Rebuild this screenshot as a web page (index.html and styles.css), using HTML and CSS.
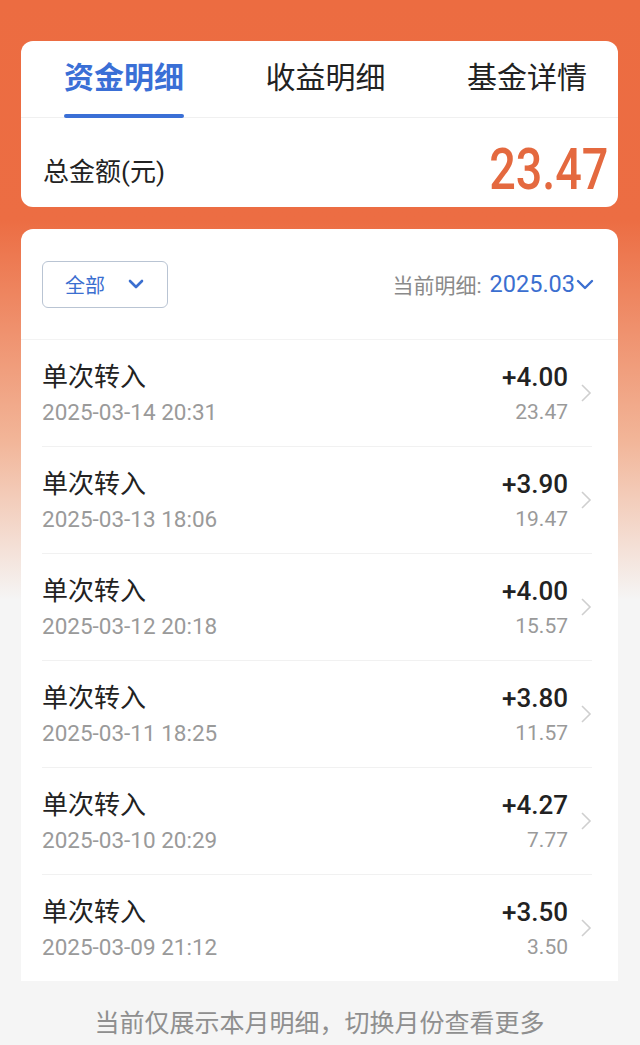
FILE: index.html
```html
<!DOCTYPE html>
<html lang="zh-cn">
<head>
    <meta charset="UTF-8">
    <meta name="viewport" content="width=device-width, initial-scale=1.0">
    <title>资金明细</title>
    <link rel="stylesheet" href="styles.css">
</head>
<body>
    <div class="page">
        <div class="summary">
            <div class="tabs">
                <div class="tab active">资金明细</div>
                <div class="tab">收益明细</div>
                <div class="tab">基金详情</div>
            </div>
            <div class="total">
                <span class="total-label">总金额(元)</span>
                <span class="total-value">23.47</span>
            </div>
        </div>

        <div class="detail">
            <div class="toolbar">
                <div class="filter">
                    <span>全部</span>
                    <svg width="18" height="12" viewBox="0 0 18 12"><path d="M3 3 L9 9 L15 3" fill="none" stroke="#3b6fd0" stroke-width="2.6" stroke-linecap="round" stroke-linejoin="round"/></svg>
                </div>
                <div class="month">
                    <span class="month-label">当前明细:</span>
                    <span class="month-value">2025.03</span>
                    <svg width="20" height="14" viewBox="0 0 20 14"><path d="M3 4 L10 11 L17 4" fill="none" stroke="#3b6fd0" stroke-width="2.4" stroke-linecap="round" stroke-linejoin="round"/></svg>
                </div>
            </div>

            <div class="list">
                <div class="row">
                    <div class="info"><div class="title">单次转入</div><div class="time">2025-03-14 20:31</div></div>
                    <div class="nums"><div class="amount">+4.00</div><div class="balance">23.47</div></div>
                    <svg class="arrow" width="12" height="20" viewBox="0 0 12 20"><path d="M2 2 L10 10 L2 18" fill="none" stroke="#cfcfcf" stroke-width="1.6"/></svg>
                </div>
                <div class="row">
                    <div class="info"><div class="title">单次转入</div><div class="time">2025-03-13 18:06</div></div>
                    <div class="nums"><div class="amount">+3.90</div><div class="balance">19.47</div></div>
                    <svg class="arrow" width="12" height="20" viewBox="0 0 12 20"><path d="M2 2 L10 10 L2 18" fill="none" stroke="#cfcfcf" stroke-width="1.6"/></svg>
                </div>
                <div class="row">
                    <div class="info"><div class="title">单次转入</div><div class="time">2025-03-12 20:18</div></div>
                    <div class="nums"><div class="amount">+4.00</div><div class="balance">15.57</div></div>
                    <svg class="arrow" width="12" height="20" viewBox="0 0 12 20"><path d="M2 2 L10 10 L2 18" fill="none" stroke="#cfcfcf" stroke-width="1.6"/></svg>
                </div>
                <div class="row">
                    <div class="info"><div class="title">单次转入</div><div class="time">2025-03-11 18:25</div></div>
                    <div class="nums"><div class="amount">+3.80</div><div class="balance">11.57</div></div>
                    <svg class="arrow" width="12" height="20" viewBox="0 0 12 20"><path d="M2 2 L10 10 L2 18" fill="none" stroke="#cfcfcf" stroke-width="1.6"/></svg>
                </div>
                <div class="row">
                    <div class="info"><div class="title">单次转入</div><div class="time">2025-03-10 20:29</div></div>
                    <div class="nums"><div class="amount">+4.27</div><div class="balance">7.77</div></div>
                    <svg class="arrow" width="12" height="20" viewBox="0 0 12 20"><path d="M2 2 L10 10 L2 18" fill="none" stroke="#cfcfcf" stroke-width="1.6"/></svg>
                </div>
                <div class="row">
                    <div class="info"><div class="title">单次转入</div><div class="time">2025-03-09 21:12</div></div>
                    <div class="nums"><div class="amount">+3.50</div><div class="balance">3.50</div></div>
                    <svg class="arrow" width="12" height="20" viewBox="0 0 12 20"><path d="M2 2 L10 10 L2 18" fill="none" stroke="#cfcfcf" stroke-width="1.6"/></svg>
                </div>
            </div>
        </div>

        <div class="footer">当前仅展示本月明细，切换月份查看更多</div>
    </div>
</body>
</html>
```

FILE: styles.css
```css
body {
    margin: 0;
    font-family: Roboto, "Noto Sans CJK SC", sans-serif;
    background: linear-gradient(to bottom, #ec6c41 0px, #ec6d43 220px, #f2b598 440px, #f5f5f5 600px, #f5f5f5 100%);
    min-height: 1045px;
}

.page {
    padding: 41px 22px 0 21px;
}

.summary {
    background: #ffffff;
    border-radius: 12px;
}

.tabs {
    display: flex;
    justify-content: space-between;
    padding: 0 31px 0 43px;
    height: 76px;
    border-bottom: 1px solid #f0f0f0;
}

.tab {
    position: relative;
    font-size: 30px;
    line-height: 74px;
    color: #222222;
}

.tab.active {
    color: #3a6fd6;
    font-weight: bold;
}

.tab.active::after {
    content: "";
    position: absolute;
    left: 0;
    right: 0;
    bottom: -1px;
    height: 4px;
    border-radius: 2px;
    background: #3a6fd6;
}

.total {
    display: flex;
    justify-content: space-between;
    align-items: center;
    height: 89px;
    padding: 0 10px 0 22px;
}

.total-label {
    font-size: 26px;
    color: #222222;
    padding-top: 14px;
}

.total-value {
    font-size: 57px;
    font-weight: 500;
    color: #e4693f;
    transform: scaleX(0.82);
    transform-origin: right center;
    padding-top: 14px;
}

.detail {
    margin-top: 22px;
    background: #ffffff;
    border-radius: 12px 12px 0 0;
}

.toolbar {
    display: flex;
    justify-content: space-between;
    align-items: center;
    height: 110px;
    padding: 0 23px 0 21px;
    border-bottom: 1px solid #f3f3f3;
}

.filter {
    display: flex;
    align-items: center;
    gap: 22px;
    width: 126px;
    height: 47px;
    box-sizing: border-box;
    padding-left: 22px;
    border: 1px solid #b9c4d3;
    border-radius: 6px;
    color: #3b6fd0;
    font-size: 20px;
}

.month {
    display: flex;
    align-items: center;
}

.month-label {
    font-size: 21px;
    color: #8a8a8a;
    margin-right: 8px;
}

.month-value {
    font-size: 23.5px;
    color: #3b6fd0;
}

.list {
    padding: 0 26px 0 21px;
}

.row {
    display: flex;
    align-items: center;
    height: 106px;
    border-bottom: 1px solid #f1f1f1;
}

.row:last-child {
    border-bottom: none;
}

.info {
    flex: 1;
}

.title {
    font-size: 26px;
    color: #222222;
    line-height: 34px;
}

.time {
    font-size: 22.5px;
    color: #9a9a9a;
    line-height: 30px;
    margin-top: 3px;
}

.nums {
    text-align: right;
}

.amount {
    font-size: 26px;
    font-weight: 500;
    color: #222222;
    line-height: 34px;
}

.balance {
    font-size: 21px;
    color: #9a9a9a;
    line-height: 30px;
    margin-top: 3px;
}

.arrow {
    margin-left: 12px;
}

.footer {
    text-align: center;
    font-size: 25px;
    color: #8f8f8f;
    padding: 22px 0 20px;
}
```
